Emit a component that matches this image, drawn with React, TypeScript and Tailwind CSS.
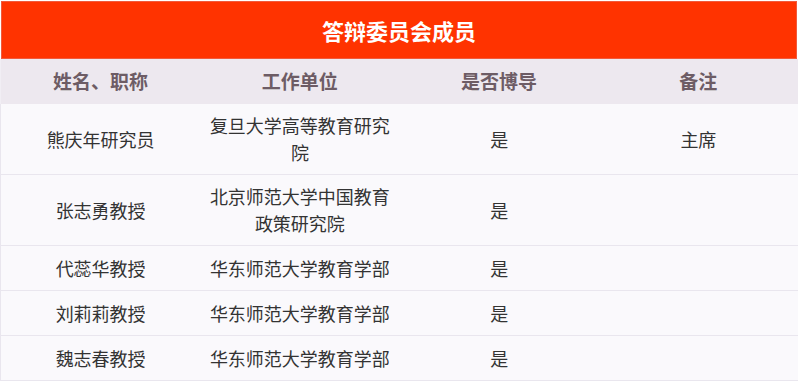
import React from "react";

const rows: [string, string, string, string][] = [
  ["熊庆年研究员", "复旦大学高等教育研究院", "是", "主席"],
  ["张志勇教授", "北京师范大学中国教育政策研究院", "是", ""],
  ["代蕊华教授", "华东师范大学教育学部", "是", ""],
  ["刘莉莉教授", "华东师范大学教育学部", "是", ""],
  ["魏志春教授", "华东师范大学教育学部", "是", ""],
];

export default function App() {
  return (
    <div
      className="w-[798px] h-[382px] overflow-hidden bg-white"
      style={{ fontFamily: '"Noto Sans CJK SC", "Noto Sans", sans-serif' }}
    >
      <div className="mx-[1px] mt-[1px] h-[58px] bg-[#ff3300] border border-[#f05a3c] flex items-center justify-center">
        <span className="text-white font-bold text-[22px] leading-none">答辩委员会成员</span>
      </div>
      <div className="grid grid-cols-4 h-[45px] bg-[#ede8ef] border-l border-[#f1eef4]">
        {["姓名、职称", "工作单位", "是否博导", "备注"].map((h) => (
          <div key={h} className="flex items-center justify-center text-[19px] font-bold text-[#6d5c65]">
            {h}
          </div>
        ))}
      </div>
      {rows.map((r, i) => (
        <div
          key={i}
          className="grid grid-cols-4 min-h-[45px] bg-[#faf9fc] border-b border-l border-[#e9e6ee] text-[18px] leading-[27px] text-[#333333]"
        >
          {r.map((c, j) => (
            <div key={j} className="flex items-center justify-center text-center px-[9px] py-[8px]">
              {c}
            </div>
          ))}
        </div>
      ))}
    </div>
  );
}
